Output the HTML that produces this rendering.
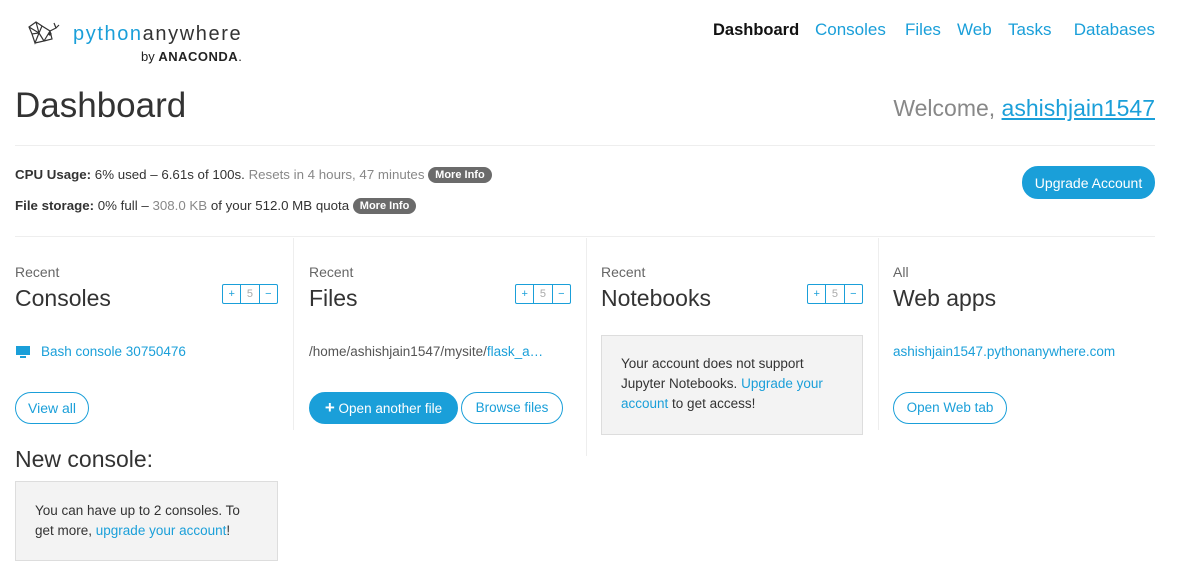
<!DOCTYPE html>
<html><head><style>
body{margin:0;width:1178px;height:573px;background:#fff;font-family:"Liberation Sans",sans-serif;color:#333;position:relative;overflow:hidden}
.a{position:absolute;white-space:nowrap}
a,.lnk{color:#1a9fd9;text-decoration:none}
.nav{font-size:17px;color:#1a9fd9}
.btn{position:absolute;border:1px solid #1a9fd9;border-radius:16px;color:#1a9fd9;font-size:14px;height:30px;line-height:30px;text-align:center;box-sizing:border-box}
.fill{background:#1a9fd9;color:#fff}
.pill{display:inline-block;background:#6b6b6b;color:#fff;font-size:11px;font-weight:bold;border-radius:9px;padding:2px 7px;vertical-align:1px}
.w{position:absolute;width:56px;height:20px;border:1px solid #1a9fd9;border-radius:2px;box-sizing:border-box;display:flex;font-size:11px}
.w span{flex:1;text-align:center;line-height:18px;color:#1a9fd9}
.w span:nth-child(2){color:#aaa;border-left:1px solid #1a9fd9;border-right:1px solid #1a9fd9}
.sm{font-size:14px;color:#666}
.h{font-size:23px;color:#333}
.box{position:absolute;background:#f3f3f3;border:1px solid #ddd;box-sizing:border-box;font-size:13.5px;line-height:20px;color:#333;padding:17px 19px}
.vl{position:absolute;top:238px;height:192px;width:1px;background:#eee}
</style></head><body>
<svg class="a" style="left:26px;top:19px" width="36" height="32" viewBox="0 0 36 32" fill="none" stroke="#333" stroke-width="1.2"><path d="M3 8 L10 3 L16 7 L13 14 L6 15 Z M10 3 L13 14 M3 8 L13 14 M6 15 L9 24 L13 14 L18 22 L9 24 M16 7 L24 12 L18 22 M24 12 L30 9 L28 4 M30 9 L33 6 M24 12 L26 20 L18 22"/><circle cx="24" cy="15" r="1" fill="#333"/></svg>
<div class="a" style="left:73px;top:23px;font-size:20px;letter-spacing:1.6px;color:#1a9fd9;font-weight:300">python<span style="color:#333">anywhere</span></div>
<div class="a" style="left:141px;top:49px;font-size:13px;color:#222">by <b style="letter-spacing:0.5px">ANACONDA</b>.</div>
<div class="a nav" style="left:713px;top:20px"><b style="color:#111;font-size:16.5px">Dashboard</b></div>
<div class="a nav" style="left:815px;top:20px">Consoles</div>
<div class="a nav" style="left:905px;top:20px">Files</div>
<div class="a nav" style="left:957px;top:20px">Web</div>
<div class="a nav" style="left:1008px;top:20px">Tasks</div>
<div class="a nav" style="right:23px;top:20px">Databases</div>
<div class="a" style="left:15px;top:86px;font-size:35px;color:#333;font-weight:300">Dashboard</div>
<div class="a" style="right:23px;top:95px;font-size:23px;color:#888">Welcome, <span style="color:#1a9fd9;text-decoration:underline">ashishjain1547</span></div>
<div class="a" style="left:15px;top:145px;width:1140px;height:1px;background:#eee"></div>
<div class="a" style="left:15px;top:167px;font-size:13.3px"><b>CPU Usage:</b> 6% used – 6.61s of 100s. <span style="color:#888">Resets in 4 hours, 47 minutes</span> <span class="pill">More Info</span></div>
<div class="a" style="left:15px;top:198px;font-size:13.3px"><b>File storage:</b> 0% full – <span style="color:#888">308.0 KB</span> of your 512.0 MB quota <span class="pill">More Info</span></div>
<div class="btn fill" style="left:1022px;top:166px;width:133px;height:33px;line-height:33px">Upgrade Account</div>
<div class="a" style="left:15px;top:236px;width:1140px;height:1px;background:#eee"></div>
<div class="vl" style="left:293px"></div><div class="vl" style="left:586px;height:218px"></div><div class="vl" style="left:878px"></div>

<div class="a sm" style="left:15px;top:264px">Recent</div><div class="a h" style="left:15px;top:285px">Consoles</div>
<div class="w" style="left:222px;top:284px"><span>+</span><span>5</span><span>−</span></div>
<svg class="a" style="left:15px;top:345px" width="16" height="14"><rect x="1" y="1" width="14" height="9" fill="#1a9fd9"/><rect x="5" y="11" width="6" height="2" fill="#1a9fd9"/></svg>
<div class="a lnk" style="left:41px;top:344px;font-size:13.5px">Bash console 30750476</div>
<div class="btn" style="left:15px;top:392px;width:74px;height:32px;line-height:30px">View all</div>

<div class="a sm" style="left:309px;top:264px">Recent</div><div class="a h" style="left:309px;top:285px">Files</div>
<div class="w" style="left:515px;top:284px"><span>+</span><span>5</span><span>−</span></div>
<div class="a" style="left:309px;top:344px;font-size:13.5px;color:#555">/home/ashishjain1547/mysite/<span class="lnk">flask_a…</span></div>
<div class="btn fill" style="left:309px;top:392px;width:149px;height:32px;line-height:30px;font-size:13.5px"><b style="font-size:17px">+</b> Open another file</div>
<div class="btn" style="left:461px;top:392px;width:102px;height:32px;line-height:30px;font-size:13.5px">Browse files</div>

<div class="a sm" style="left:601px;top:264px">Recent</div><div class="a h" style="left:601px;top:285px">Notebooks</div>
<div class="w" style="left:807px;top:284px"><span>+</span><span>5</span><span>−</span></div>
<div class="box" style="left:601px;top:335px;width:262px;height:100px;padding:18px 19px">Your account does not support Jupyter Notebooks. <a>Upgrade your account</a> to get access!</div>

<div class="a sm" style="left:893px;top:264px">All</div><div class="a h" style="left:893px;top:285px">Web apps</div>
<div class="a lnk" style="left:893px;top:344px;font-size:13.5px">ashishjain1547.pythonanywhere.com</div>
<div class="btn" style="left:893px;top:392px;width:114px;height:32px;line-height:30px;font-size:13.5px">Open Web tab</div>

<div class="a" style="left:15px;top:446px;font-size:23px;color:#333">New console:</div>
<div class="box" style="left:15px;top:481px;width:263px;height:80px;padding:19px 19px">You can have up to 2 consoles. To get more, <a>upgrade your account</a>!</div>
</body></html>
